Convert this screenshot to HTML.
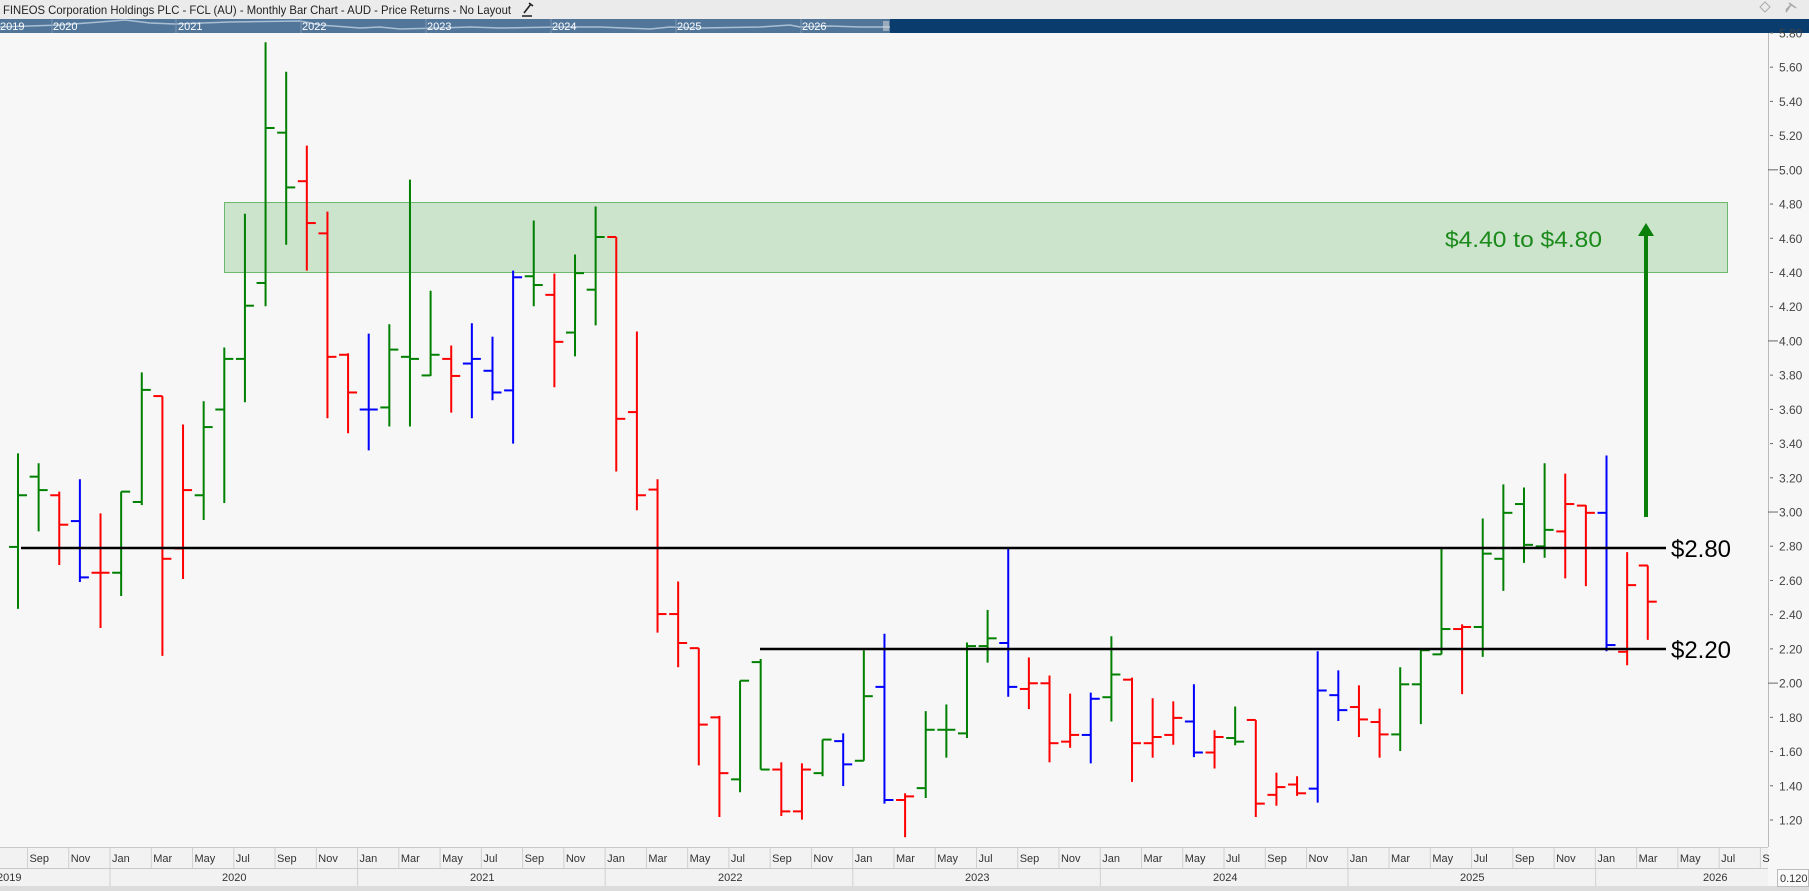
<!DOCTYPE html>
<html><head><meta charset="utf-8"><style>
html,body{margin:0;padding:0;background:#f7f7f7;width:1809px;height:891px;overflow:hidden}
svg{display:block;font-family:"Liberation Sans",sans-serif}
</style></head><body>
<svg id="s" width="1809" height="891" viewBox="0 0 1809 891" xmlns="http://www.w3.org/2000/svg">
<rect x="0" y="0" width="1809" height="891" fill="#f7f7f7"/>
<!-- title bar -->
<rect x="0" y="0" width="1809" height="19" fill="#ebebeb"/>
<text x="3" y="14" font-size="12" fill="#222" textLength="508" lengthAdjust="spacingAndGlyphs">FINEOS Corporation Holdings PLC - FCL (AU) - Monthly Bar Chart - AUD - Price Returns - No Layout</text>
<g stroke="#222" stroke-width="1.6" fill="none"><path d="M524 13 L531 4 M529 3 L533 6 M522 16 L532 16"/></g>
<path d="M1765 2 L1770 7 L1765 12 L1760 7 Z" fill="none" stroke="#aaa" stroke-width="1"/>
<path d="M1786 10 L1792 4 M1789 3 L1796 8 M1790 6 L1786 12" stroke="#aaa" stroke-width="1.6" fill="none"/>
<!-- navigator -->
<rect x="0" y="19" width="890" height="14" fill="#52769a"/>
<rect x="890" y="19" width="919" height="14" fill="#0a3d6e"/>
<polyline points="0,27 30,26 60,25 100,22 125,20 150,23 175,24 230,22 300,21 320,25 360,28 380,27 400,29 440,28 470,27 500,28 560,27 600,27 650,29 670,27 700,28 760,27 790,25 800,27 830,26 860,27 890,27" fill="none" stroke="#a9bfd3" stroke-width="1.5"/>
<g stroke="#7d98b3" stroke-width="1"><line x1="52" y1="19" x2="52" y2="33"/><line x1="176" y1="19" x2="176" y2="33"/><line x1="301" y1="19" x2="301" y2="33"/><line x1="426" y1="19" x2="426" y2="33"/><line x1="551" y1="19" x2="551" y2="33"/><line x1="676" y1="19" x2="676" y2="33"/><line x1="801" y1="19" x2="801" y2="33"/></g>
<g font-size="11" fill="#fff"><text x="0" y="30">2019</text><text x="53" y="30">2020</text><text x="178" y="30">2021</text><text x="302" y="30">2022</text><text x="427" y="30">2023</text><text x="552" y="30">2024</text><text x="677" y="30">2025</text><text x="802" y="30">2026</text></g>
<g stroke="#ddd" stroke-width="1"><line x1="884" y1="21" x2="884" y2="31"/><line x1="886" y1="21" x2="886" y2="31"/><line x1="888" y1="21" x2="888" y2="31"/></g>
<!-- green zone -->
<rect x="224.5" y="202.5" width="1503" height="70" fill="#cce3cc" stroke="#6cb86c" stroke-width="1"/>
<g id="bars"></g>
<!-- lines -->
<line x1="21" y1="548" x2="1666" y2="548" stroke="#000" stroke-width="2.5"/>
<line x1="760" y1="649" x2="1666" y2="649" stroke="#000" stroke-width="2.5"/>
<text x="1671" y="557" font-size="24" fill="#000" textLength="60" lengthAdjust="spacingAndGlyphs">$2.80</text>
<text x="1671" y="658" font-size="24" fill="#000" textLength="60" lengthAdjust="spacingAndGlyphs">$2.20</text>
<text x="1445" y="247" font-size="22" fill="#1a8a1a" textLength="157" lengthAdjust="spacingAndGlyphs">$4.40 to $4.80</text>
<!-- arrow -->
<rect x="1644" y="234" width="4" height="283" fill="#0a800a"/>
<path d="M1638 236 L1646 223 L1654 236 Z" fill="#0a800a"/>
<!-- price axis -->
<line x1="1768.5" y1="33" x2="1768.5" y2="847" stroke="#bbb" stroke-width="1"/>
<g id="axis" font-size="12" fill="#444"></g>
<!-- bottom axis -->
<rect x="0" y="847" width="1768" height="40" fill="#f2f2f2"/>
<line x1="0" y1="847.5" x2="1768" y2="847.5" stroke="#c8c8c8"/>
<line x1="0" y1="868.5" x2="1768" y2="868.5" stroke="#c8c8c8"/>
<rect x="0" y="886" width="1809" height="5" fill="#dcdcdc"/>
<g id="months" font-size="11" fill="#333"></g>
<rect x="1777.5" y="869.5" width="31" height="17" fill="#fafafa" stroke="#bbb"/>
<text x="1780" y="882" font-size="11" fill="#333">0.120</text>
</svg>
<script>
var NS="http://www.w3.org/2000/svg";
function el(t,a,p,txt){var e=document.createElementNS(NS,t);for(var k in a)e.setAttribute(k,a[k]);if(txt!==undefined)e.textContent=txt;p.appendChild(e);return e;}
var C={G:"#008000",R:"#ff0000",B:"#0000ff"};
var D=[
["G",812,1113,993,893],["G",831,963,857,883],["R",886,1028,893,950],["B",862,1061,943,1052],["R",928,1150,1043,1043],
["G",886,1088,1043,886],["G",655,912,906,689],["R",701,1204,701,1016],["R",756,1055,996,883],["G",711,941,893,761],
["G",607,908,727,629],["G",348,713,629,526],["G",16,527,482,182],["G",73,408,191,297],["R",216,458,285,366],
["R",344,744,386,625],["R",618,773,621,694],["B",580,806,727,727],["G",562,760,723,611],["G",282,760,625,629],
["G",497,662,661,621],["R",603,733,629,662],["B",560,744,638,629],["B",586,709,652,694],["B",458,793,690,471],
["G",361,527,469,486],["R",464,684,505,596],["G",427,624,578,463],["G",334,564,495,393],["R",393,847,393,745],
["R",576,922,732,893],["R",862,1159,882,1123],["R",1060,1226,1123,1179],["R",1189,1416,1189,1337],["R",1320,1516,1323,1431],
["G",1252,1468,1443,1252],["G",1210,1424,1216,1424],["R",1410,1514,1424,1505],["R",1412,1521,1505,1424],["G",1366,1437,1431,1366],
["B",1354,1456,1369,1414],["G",1193,1407,1407,1282],["B",1161,1490,1264,1483],["R",1470,1555,1483,1476],["G",1311,1479,1460,1347],
["G",1298,1401,1347,1347],["G",1178,1363,1354,1185],["G",1115,1217,1185,1170],["B",996,1283,1179,1264],["R",1207,1307,1268,1257],
["R",1242,1410,1257,1373],["R",1277,1382,1370,1357],["B",1275,1412,1357,1287],["G",1166,1331,1284,1240],["R",1246,1448,1250,1373],
["R",1286,1401,1373,1361],["R",1292,1376,1357,1324],["B",1259,1400,1331,1391],["R",1348,1422,1391,1361],["G",1302,1377,1363,1370],
["R",1328,1516,1328,1490],["R",1430,1494,1473,1458],["R",1437,1475,1453,1470],["B",1195,1488,1461,1271],["B",1232,1330,1280,1309],
["R",1261,1361,1303,1327],["R",1306,1401,1332,1356],["G",1226,1388,1356,1259],["G",1191,1336,1259,1193],["G",996,1201,1201,1152],
["R",1143,1278,1152,1148],["G",938,1206,1148,1006],["G",872,1078,1016,927],["G",878,1024,910,989],["G",831,1014,992,960],
["R",851,1054,963,910],["R",912,1069,913,927],["B",816,1195,927,1183],["R",1003,1222,1196,1067],["R",1029,1173,1029,1099]];
var g=document.getElementById("bars");
function Y(z){return 34+z/1.936;}
D.forEach(function(b,i){var x=18+20.63*i,c=C[b[0]];
el("line",{x1:x,y1:Y(b[1]),x2:x,y2:Y(b[2]),stroke:c,"stroke-width":2},g);
el("line",{x1:x-9,y1:Y(b[3]),x2:x,y2:Y(b[3]),stroke:c,"stroke-width":2},g);
el("line",{x1:x,y1:Y(b[4]),x2:x+9,y2:Y(b[4]),stroke:c,"stroke-width":2},g);});
var ax=document.getElementById("axis");
for(var k=0;k<=23;k++){var p=1.2+0.2*k,y=820-(p-1.2)*171.1;var maj=Math.abs(p-Math.round(p))<0.01;
el("line",{x1:maj?1768:1770,y1:y,x2:maj?1778:1773,y2:y,stroke:"#666","stroke-width":1},ax);
el("text",{x:1779,y:y+4.5},ax,p.toFixed(2));}
var mg=document.getElementById("months");
var names=["Jan","Feb","Mar","Apr","May","Jun","Jul","Aug","Sep","Oct","Nov","Dec"];
for(var m=-4;m<=80;m+=2){var bx=110+20.63*m;var nm=names[((m%12)+12)%12];
el("line",{x1:bx,y1:848,x2:bx,y2:868,stroke:"#d0d0d0","stroke-width":1},mg);
if(bx+2<1768)el("text",{x:bx+2,y:862},mg,m==80?"S":nm);}
var yrs=["2019","2020","2021","2022","2023","2024","2025","2026"];
for(var k2=0;k2<7;k2++){var bx2=110+247.6*k2;el("line",{x1:bx2,y1:869,x2:bx2,y2:886,stroke:"#d0d0d0"},mg);}
var yc=[-3,222,470,718,965,1213,1460,1703];
yrs.forEach(function(t,i){el("text",{x:yc[i],y:881},mg,t);});
</script>
</body></html>
